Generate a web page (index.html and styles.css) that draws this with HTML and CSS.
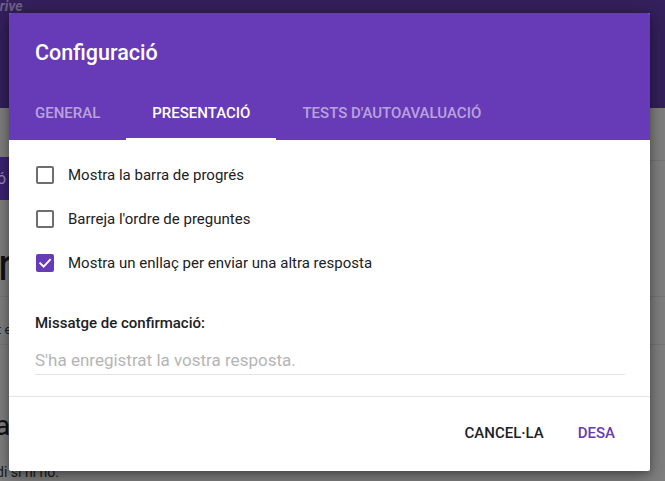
FILE: index.html
```html
<!DOCTYPE html>
<html lang="ca">
<head>
<meta charset="utf-8">
<title>Configuració</title>
<link rel="stylesheet" href="styles.css">
</head>
<body>
<div class="page">
  <header class="page-header"><span class="brand">Drive</span></header>
  <main class="page-body">
    <div class="pb-top"></div>
    <div class="pb-tabs"><div class="pb-chip">ó</div><div class="pb-rule"></div></div>
    <div class="pb-title"><span class="pb-big">r</span></div>
    <div class="pb-desc"><span class="pb-small">t e</span></div>
    <div class="pb-q"><span class="pb-mid">a</span><span class="pb-opts">di si ni no.</span></div>
  </main>
</div>

<div class="dialog" role="dialog" aria-labelledby="dlg-title">
  <div class="dlg-head">
    <h1 class="dlg-title" id="dlg-title">Configuració</h1>
    <nav class="tabs">
      <span class="tab">GENERAL</span>
      <span class="tab active">PRESENTACIÓ</span>
      <span class="tab">TESTS D'AUTOAVALUACIÓ</span>
    </nav>
  </div>
  <div class="dlg-body">
    <label class="opt"><span class="box"></span><span class="opt-text">Mostra la barra de progrés</span></label>
    <label class="opt"><span class="box"></span><span class="opt-text">Barreja l'ordre de preguntes</span></label>
    <label class="opt"><span class="box checked"><svg width="18" height="18" viewBox="0 0 18 18"><path d="M4.2 9.3 L7.6 12.6 L14 5.8" fill="none" stroke="#fff" stroke-width="1.9" stroke-linecap="square"/></svg></span><span class="opt-text">Mostra un enllaç per enviar una altra resposta</span></label>
    <div class="field-label">Missatge de confirmació:</div>
    <div class="field-input">S'ha enregistrat la vostra resposta.</div>
  </div>
  <div class="dlg-foot">
    <span class="btn">CANCEL·LA</span>
    <span class="btn primary">DESA</span>
  </div>
</div>
</body>
</html>
```
FILE: styles.css
```css
html, body {
  margin: 0;
  padding: 0;
}
body {
  width: 665px;
  height: 481px;
  overflow: hidden;
  background: #7f7f7f;
  font-family: Roboto, "Noto Sans", Arial, sans-serif;
  position: relative;
}
.page {
  width: 665px;
  height: 481px;
  display: flex;
  flex-direction: column;
}
.page-header {
  height: 108px;
  background: #33205c;
  flex: none;
}
.brand {
  display: block;
  margin-left: -9px;
  font-size: 14px;
  line-height: 12px;
  font-weight: 700;
  font-style: italic;
  color: #6d5f88;
}
.page-body {
  flex: 1;
  background: #808080;
  display: flex;
  flex-direction: column;
}
.pb-top { height: 49px; flex: none; }
.pb-tabs { height: 43px; display: flex; flex: none; }
.pb-chip {
  width: 9px;
  background: #3b2372;
  color: #9c8cc0;
  font-size: 16px;
  line-height: 43px;
  text-indent: -3px;
  overflow: hidden;
}
.pb-rule { flex: 1; margin-top: 3px; border-top: 1px solid #767676; }
.pb-title {
  height: 96px;
  flex: none;
  border-bottom: 1px solid #767676;
}
.pb-big {
  display: block;
  margin-top: 40px;
  margin-left: -2px;
  font-size: 44px;
  line-height: 50px;
  color: #111;
}
.pb-desc {
  height: 47px;
  flex: none;
  border-bottom: 1px solid #767676;
}
.pb-small {
  display: block;
  margin-top: 25px;
  margin-left: -3px;
  font-size: 13px;
  line-height: 16px;
  color: #222;
}
.pb-q { flex: 1; display: flex; flex-direction: column; }
.pb-mid {
  display: block;
  margin-top: 65px;
  margin-left: -5px;
  font-size: 28px;
  line-height: 32px;
  color: #111;
}
.pb-opts {
  display: block;
  margin-top: 23px;
  margin-left: -4px;
  font-size: 14px;
  line-height: 14px;
  color: #1a1a1a;
}

.dialog {
  position: absolute;
  left: 9px;
  top: 13px;
  width: 641px;
  height: 458px;
  background: #fff;
  border-radius: 2px;
  box-shadow: 0 6px 20px rgba(0,0,0,0.35), 0 2px 6px rgba(0,0,0,0.25);
  display: flex;
  flex-direction: column;
  overflow: hidden;
}
.dlg-head {
  background: #673ab7;
  flex: none;
}
.dlg-title {
  margin: 0;
  padding: 26px 26px 25px;
  font-size: 21.5px;
  line-height: 28px;
  font-weight: 500;
  color: #fff;
}
.tabs {
  display: flex;
  height: 48px;
}
.tab {
  box-sizing: border-box;
  height: 48px;
  padding: 13px 26px 0;
  font-size: 15px;
  line-height: 16px;
  font-weight: 500;
  color: rgba(255,255,255,0.55);
  border-bottom: 2px solid transparent;
}
.tab.active {
  color: #fff;
  border-bottom-color: #fff;
}
.dlg-body {
  flex: none;
  padding: 13px 26px 21px;
}
.opt {
  display: flex;
  align-items: center;
  height: 44px;
  gap: 14px;
}
.box {
  box-sizing: border-box;
  width: 18px;
  height: 18px;
  margin-left: 1px;
  border: 2px solid #6e6e6e;
  border-radius: 2px;
  flex: none;
  position: relative;
}
.box.checked {
  background: #673ab7;
  border-color: #673ab7;
}
.box svg {
  position: absolute;
  left: -2px;
  top: -2px;
}
.opt-text {
  font-size: 15px;
  line-height: 20px;
  color: #202124;
}
.field-label {
  margin-top: 28px;
  font-size: 15px;
  line-height: 20px;
  font-weight: 500;
  color: #202124;
}
.field-input {
  margin-top: 17px;
  width: 590px;
  padding-bottom: 4px;
  font-size: 17px;
  line-height: 20px;
  color: #b5b5b5;
  border-bottom: 1px solid #e2e2e2;
}
.dlg-foot {
  flex: 1;
  border-top: 1px solid #e6e6e6;
  display: flex;
  justify-content: flex-end;
  align-items: center;
  gap: 18px;
  padding: 0 27px 2px 0;
}
.btn {
  padding: 0 8px;
  font-size: 15px;
  line-height: 36px;
  font-weight: 500;
  color: #202124;
}
.btn.primary {
  color: #673ab7;
}
```
